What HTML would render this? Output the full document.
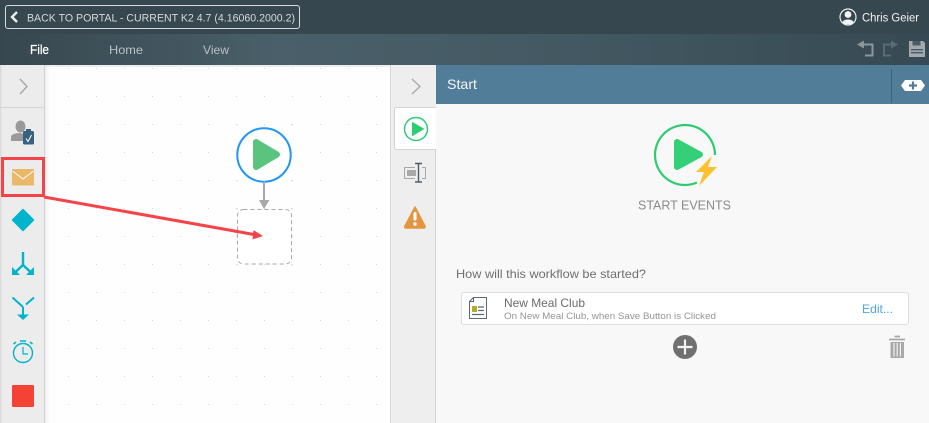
<!DOCTYPE html>
<html><head><meta charset="utf-8">
<style>
html,body{margin:0;padding:0;width:929px;height:423px;overflow:hidden;background:#fff}
svg{display:block}
text{font-family:"Liberation Sans",sans-serif}
</style></head>
<body>
<svg width="929" height="423" viewBox="0 0 929 423" xmlns="http://www.w3.org/2000/svg">
<defs>
<linearGradient id="nav" x1="0" x2="1" y1="0" y2="0">
<stop offset="0" stop-color="#37474f"/><stop offset=".3" stop-color="#4a5f69"/><stop offset=".55" stop-color="#455a64"/><stop offset="1" stop-color="#374a54"/>
</linearGradient>
<linearGradient id="shadow" x1="0" x2="1" y1="0" y2="0">
<stop offset="0" stop-color="#e2e2e2"/><stop offset="1" stop-color="#fff"/>
</linearGradient>
<pattern id="dots" x="68" y="68" width="28" height="28" patternUnits="userSpaceOnUse">
<rect x="0" y="0" width="1" height="1" fill="#d4d4d4"/>
</pattern>
</defs>

<!-- top bar -->
<rect width="929" height="34" fill="#37474f"/>
<rect y="34" width="929" height="31" fill="url(#nav)"/>
<rect x="5.5" y="5.5" width="294" height="23" rx="2.5" fill="none" stroke="#d5dbde" stroke-width="1"/>
<path d="M17 12 L12 17 L17 22" fill="none" stroke="#eef1f2" stroke-width="2.4"/>
<text x="27" y="21.5" font-size="10.6" fill="#d3d9dc" textLength="268" lengthAdjust="spacingAndGlyphs">BACK TO PORTAL - CURRENT K2 4.7 (4.16060.2000.2)</text>
<text x="30" y="54" font-size="12.5" fill="#ffffff" stroke="#ffffff" stroke-width=".2" textLength="19" lengthAdjust="spacingAndGlyphs">File</text>
<text x="109" y="54" font-size="12" fill="#b7c1c6" textLength="34" lengthAdjust="spacingAndGlyphs">Home</text>
<text x="203" y="54" font-size="12" fill="#b7c1c6" textLength="26" lengthAdjust="spacingAndGlyphs">View</text>

<!-- user -->
<circle cx="848" cy="17" r="8" fill="#37474f" stroke="#eceff0" stroke-width="1.2"/>
<circle cx="848" cy="14.5" r="3.4" fill="#f2f4f5"/>
<path d="M842.5 22.5 C843 18.5 853 18.5 853.5 22.5 L851 24.2 L845 24.2 Z" fill="#f2f4f5"/>
<text x="862" y="21.5" font-size="11.5" fill="#f0f2f3" textLength="57" lengthAdjust="spacingAndGlyphs">Chris Geier</text>

<!-- undo / redo / save -->
<path d="M863 44.5 H872.5 V55.5 H865" fill="none" stroke="#8a979d" stroke-width="2"/>
<path d="M857 44.5 L864 40.5 V48.5 Z" fill="#8a979d"/>
<path d="M891 55.5 H884 V44.5 H892" fill="none" stroke="#5a6b74" stroke-width="2"/>
<path d="M898 44.5 L891 40.5 V48.5 Z" fill="#5a6b74"/>
<path d="M909 41 H923 L925 43 V57 H909 Z" fill="#a0aaae"/>
<rect x="912.5" y="41" width="8" height="4.5" fill="#4a5d67"/>
<rect x="911" y="49" width="12" height="1.4" fill="#4a5d67"/><rect x="911" y="52" width="12" height="1.4" fill="#4a5d67"/>

<!-- left toolbox -->
<rect y="65" width="45" height="358" fill="#ececec"/>
<rect x="0" y="65" width="1.5" height="358" fill="#dcdcdc"/>
<rect x="44" y="65" width="1" height="358" fill="#d2d2d2"/>
<rect x="1" y="107" width="43" height="1" fill="#d4d4d4"/>
<path d="M20 79 L27 86.5 L20 94" fill="none" stroke="#a8a8a8" stroke-width="1.4"/>

<!-- canvas -->
<rect x="45" y="65" width="345" height="358" fill="#fefefe"/>
<rect x="45" y="65" width="345" height="358" fill="url(#dots)"/>
<rect x="45" y="65" width="5" height="358" fill="url(#shadow)" opacity=".5"/>
<rect x="45" y="65" width="345" height="2" fill="#e6e6e6" opacity=".7"/>

<!-- user task icon -->
<ellipse cx="20.5" cy="126.5" rx="5" ry="6" fill="#9a9a9a"/>
<path d="M11 141 V137 C11 134.5 15 133 20 133 L24 134 V141 Z" fill="#9a9a9a"/>
<rect x="23" y="131" width="11" height="13.5" rx="1.5" fill="#37617f"/>
<rect x="26" y="129" width="5" height="3" fill="#37617f"/>
<path d="M26 138.5 L28 141.5 L31.5 135" fill="none" stroke="#fff" stroke-width="1"/>

<!-- mail icon -->
<rect x="12" y="169" width="22" height="16.5" rx="1" fill="#e9b869"/>
<path d="M12.5 171 L23 179 L33.5 171" fill="none" stroke="#fff" stroke-width="1"/>
<rect x="2.5" y="158.5" width="41" height="37" fill="none" stroke="#f4444a" stroke-width="3"/>

<!-- diamond -->
<path d="M23 209.5 L33.5 220 L23 230.5 L12.5 220 Z" fill="#00b4cc" stroke="#00b4cc" stroke-width="1.5" stroke-linejoin="round"/>

<!-- split -->
<path d="M23 252 V265 M23 265 L15.5 272 M23 265 L30.5 272" fill="none" stroke="#00b4cc" stroke-width="2.4"/>
<path d="M12 267 V275 H20 Z M34 267 V275 H26 Z" fill="#00b4cc"/>

<!-- merge -->
<path d="M12.5 297.5 L23 307 M34 297.5 L26 304.5 M23 307 V316" fill="none" stroke="#00b4cc" stroke-width="2"/>
<path d="M17 314.5 H29 L23 320 Z" fill="#00b4cc"/>

<!-- timer -->
<circle cx="23" cy="353" r="9.5" fill="none" stroke="#00b4cc" stroke-width="1.4"/>
<path d="M23 347 V354 H28" fill="none" stroke="#00b4cc" stroke-width="1.2"/>
<path d="M20 341 H26 M13.5 344 L16 342 M32.5 344 L30 342" stroke="#00b4cc" stroke-width="1.6" fill="none"/>

<!-- stop -->
<rect x="12" y="385" width="22" height="22" rx="1" fill="#f44336"/>

<!-- start node -->
<circle cx="264" cy="155" r="26.7" fill="#fff" stroke="#2196f3" stroke-width="2"/>
<path d="M256 142 V167 L277 154.5 Z" fill="#5ac47e" stroke="#5ac47e" stroke-width="6" stroke-linejoin="round"/>
<rect x="263" y="182" width="2" height="19" fill="#a8a8a8"/>
<path d="M259 200 H269.5 L264 209 Z" fill="#a8a8a8"/>
<rect x="237.5" y="209.5" width="54" height="54.5" rx="6" fill="#fff" stroke="#a8a8a8" stroke-dasharray="4 3"/>
<path d="M237 209 h1 M291 209 h1 M237 265 h1 M291 265 h1 M237 181 h1 M264 181 h1 M291 181 h1 M237 125 h1 M264 125 h1 M291 125 h1" stroke="#d4d4d4"/>

<!-- arrow -->
<path d="M44 197 L254 234.5" stroke="#f4444a" stroke-width="3" fill="none"/>
<path d="M263 236 L253.5 230 L252.5 239.5 Z" fill="#f4444a"/>

<!-- right tab rail -->
<rect x="390" y="65" width="46" height="358" fill="#eeeeee"/>
<rect x="390" y="65" width="1" height="358" fill="#d8d8d8"/>
<rect x="435" y="149" width="1" height="274" fill="#d2d2d2"/>
<path d="M412 79 L420 86.5 L412 94" fill="none" stroke="#ababab" stroke-width="1.4"/>

<!-- right panel -->
<rect x="436" y="65" width="493" height="358" fill="#f8f8f8"/>
<rect x="436" y="65" width="493" height="39" fill="#527d99"/>
<rect x="891" y="69" width="1" height="34" fill="#3b637e"/>
<path d="M901 85.5 L905 80 H921 L925 85.5 L921 91 H905 Z" fill="#fff"/>
<path d="M913 81.5 V89.5 M909 85.5 H917" stroke="#527d99" stroke-width="2.2" fill="none"/>
<text x="447" y="89" font-size="14" fill="#f3f6f8" textLength="30" lengthAdjust="spacingAndGlyphs">Start</text>

<!-- active tab -->
<path d="M436 107.5 H397 Q394.5 107.5 394.5 110 V147 Q394.5 149.5 397 149.5 H436" fill="#fff" stroke="#d4d4d4"/>
<rect x="436" y="104" width="1" height="46" fill="#f8f8f8"/>
<circle cx="416" cy="129" r="11.5" fill="none" stroke="#2ecc71" stroke-width="1.5"/>
<path d="M412.5 122.5 V135.5 L423.5 129 Z" fill="#2ecc71" stroke="#2ecc71" stroke-linejoin="round"/>

<!-- form icon -->
<path d="M415 167.5 H404.5 V178.5 H415 M422 167.5 H425.5 V178.5 H422" fill="none" stroke="#a8a8a8"/>
<rect x="407" y="170" width="9" height="6" fill="#a8a8a8"/>
<path d="M418.5 163 V182 M415 163.5 H422 M415 182 H422" stroke="#4d5d66" stroke-width="1.4" fill="none"/>

<!-- warning -->
<path d="M415 207 L425 226 Q425.5 228 423.5 228 H406 Q404 228 405 226 Z" fill="#e39641" stroke="#e39641" stroke-width="1.5" stroke-linejoin="round"/>
<rect x="413.5" y="212" width="3" height="8.5" rx="1.3" fill="#fff"/>
<circle cx="415" cy="224" r="1.7" fill="#fff"/>

<!-- start events -->
<path d="M715 155 A30 30 0 1 0 697 182.5" fill="none" stroke="#2ecc71" stroke-width="2.2"/>
<path d="M677 142 V167 L700 154.5 Z" fill="#34d077" stroke="#34d077" stroke-width="6" stroke-linejoin="round"/>
<path d="M712 156 L696 172 H704 L699 186 L717 167 H708 Z" fill="#fdc02f"/>
<text x="638" y="209.5" font-size="12.5" fill="#8a8a8a" textLength="93" lengthAdjust="spacingAndGlyphs">START EVENTS</text>

<text x="456" y="278" font-size="12" fill="#6f6f6f" textLength="190" lengthAdjust="spacingAndGlyphs">How will this workflow be started?</text>

<!-- event card -->
<rect x="461.5" y="292.5" width="447" height="32" rx="2" fill="#fff" stroke="#dedede"/>
<path d="M473.5 297.5 H486.5 V318.5 H469.5 V301.5 Z M473.5 297.5 V301.5 H469.5" fill="#fff" stroke="#5b696f" stroke-width="1"/>
<rect x="472" y="306" width="5" height="6" fill="#b5ad2a"/>
<path d="M478 307 H484 M478 310.5 H484 M472 314.5 H484" stroke="#5b696f" stroke-width="1.2"/>
<text x="504" y="307" font-size="12" fill="#6a6a6a" textLength="81" lengthAdjust="spacingAndGlyphs">New Meal Club</text>
<text x="504" y="319" font-size="9.3" fill="#969696" textLength="212" lengthAdjust="spacingAndGlyphs">On New Meal Club, when Save Button is Clicked</text>
<text x="862" y="313" font-size="12" fill="#4da3e8" textLength="31" lengthAdjust="spacingAndGlyphs">Edit...</text>

<!-- add -->
<circle cx="685" cy="347" r="12" fill="#707070"/>
<path d="M685 339.5 V354.5 M677.5 347 H692.5" stroke="#f4f4f4" stroke-width="2.2"/>

<!-- trash -->
<path d="M889 339.5 H905 M894.5 336.5 H900" stroke="#a8a8a8" stroke-width="1.8" fill="none"/>
<path d="M890.5 342 H904 V358 H890.5 Z" fill="#a8a8a8"/>
<path d="M894 343 V356.5 M897.2 343 V356.5 M900.4 343 V356.5" stroke="#f8f8f8" stroke-width="1.1"/>
</svg>
</body></html>
